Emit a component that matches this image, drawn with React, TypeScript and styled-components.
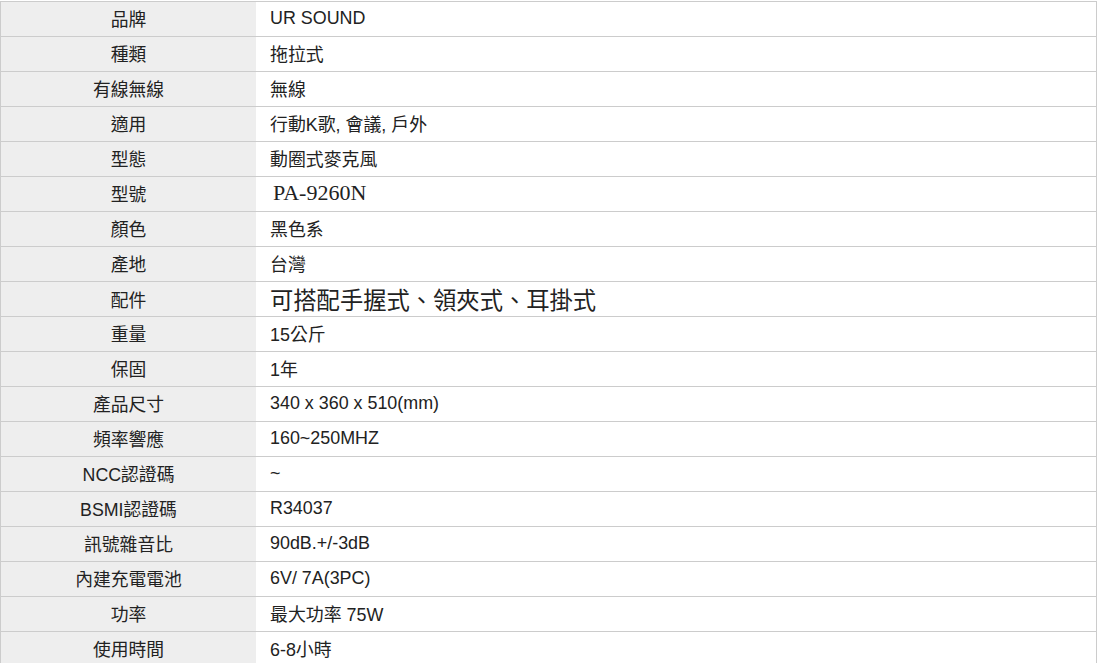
import React from "react";
import styled, { createGlobalStyle } from "styled-components";

const Global = createGlobalStyle`
  html, body { margin: 0; padding: 0; background: #fff; }
  body { font-family: "Liberation Sans", Arial, "Noto Sans CJK TC", sans-serif; }
`;

const Table = styled.div`
  margin-top: 1px;
  width: 1097px;
  box-sizing: border-box;
  border-left: 1px solid #cccccc;
  border-right: 1px solid #cccccc;
  display: flex;
  flex-direction: column;
`;

const Row = styled.div`
  display: grid;
  grid-template-columns: 255px 1fr;
  height: 35px;
  box-sizing: border-box;
  border-top: 1px solid #cccccc;
`;

const Label = styled.div`
  background: #eeeeee;
  display: flex;
  align-items: center;
  justify-content: center;
  padding-bottom: 2px;
  font-size: 17.8px;
  color: #222;
  font-family: "Liberation Sans", Arial, "Noto Sans CJK TC", sans-serif;
`;

type Variant = "normal" | "serif" | "large";

const Value = styled.div<{ $variant: Variant }>`
  display: flex;
  align-items: center;
  padding-left: ${(p) => (p.$variant === "serif" ? "17px" : "14px")};
  padding-bottom: 2px;
  color: #222;
  white-space: nowrap;
  font-family: ${(p) =>
    p.$variant === "serif"
      ? `"Liberation Serif", "Times New Roman", serif`
      : `"Liberation Sans", Arial, "Noto Sans CJK TC", sans-serif`};
  font-size: ${(p) =>
    p.$variant === "serif" ? "22px" : p.$variant === "large" ? "23.3px" : "17.9px"};
`;

const rows: { k: string; v: string; variant?: Variant }[] = [
  { k: "品牌", v: "UR SOUND" },
  { k: "種類", v: "拖拉式" },
  { k: "有線無線", v: "無線" },
  { k: "適用", v: "行動K歌, 會議, 戶外" },
  { k: "型態", v: "動圈式麥克風" },
  { k: "型號", v: "PA-9260N", variant: "serif" },
  { k: "顏色", v: "黑色系" },
  { k: "產地", v: "台灣" },
  { k: "配件", v: "可搭配手握式、領夾式、耳掛式", variant: "large" },
  { k: "重量", v: "15公斤" },
  { k: "保固", v: "1年" },
  { k: "產品尺寸", v: "340 x 360 x 510(mm)" },
  { k: "頻率響應", v: "160~250MHZ" },
  { k: "NCC認證碼", v: "~" },
  { k: "BSMI認證碼", v: "R34037" },
  { k: "訊號雜音比", v: "90dB.+/-3dB" },
  { k: "內建充電電池", v: "6V/ 7A(3PC)" },
  { k: "功率", v: "最大功率 75W" },
  { k: "使用時間", v: "6-8小時" },
];

export default function App() {
  return (
    <>
      <Global />
      <Table>
        {rows.map((r) => (
          <Row key={r.k}>
            <Label>{r.k}</Label>
            <Value $variant={r.variant ?? "normal"}>{r.v}</Value>
          </Row>
        ))}
      </Table>
    </>
  );
}
